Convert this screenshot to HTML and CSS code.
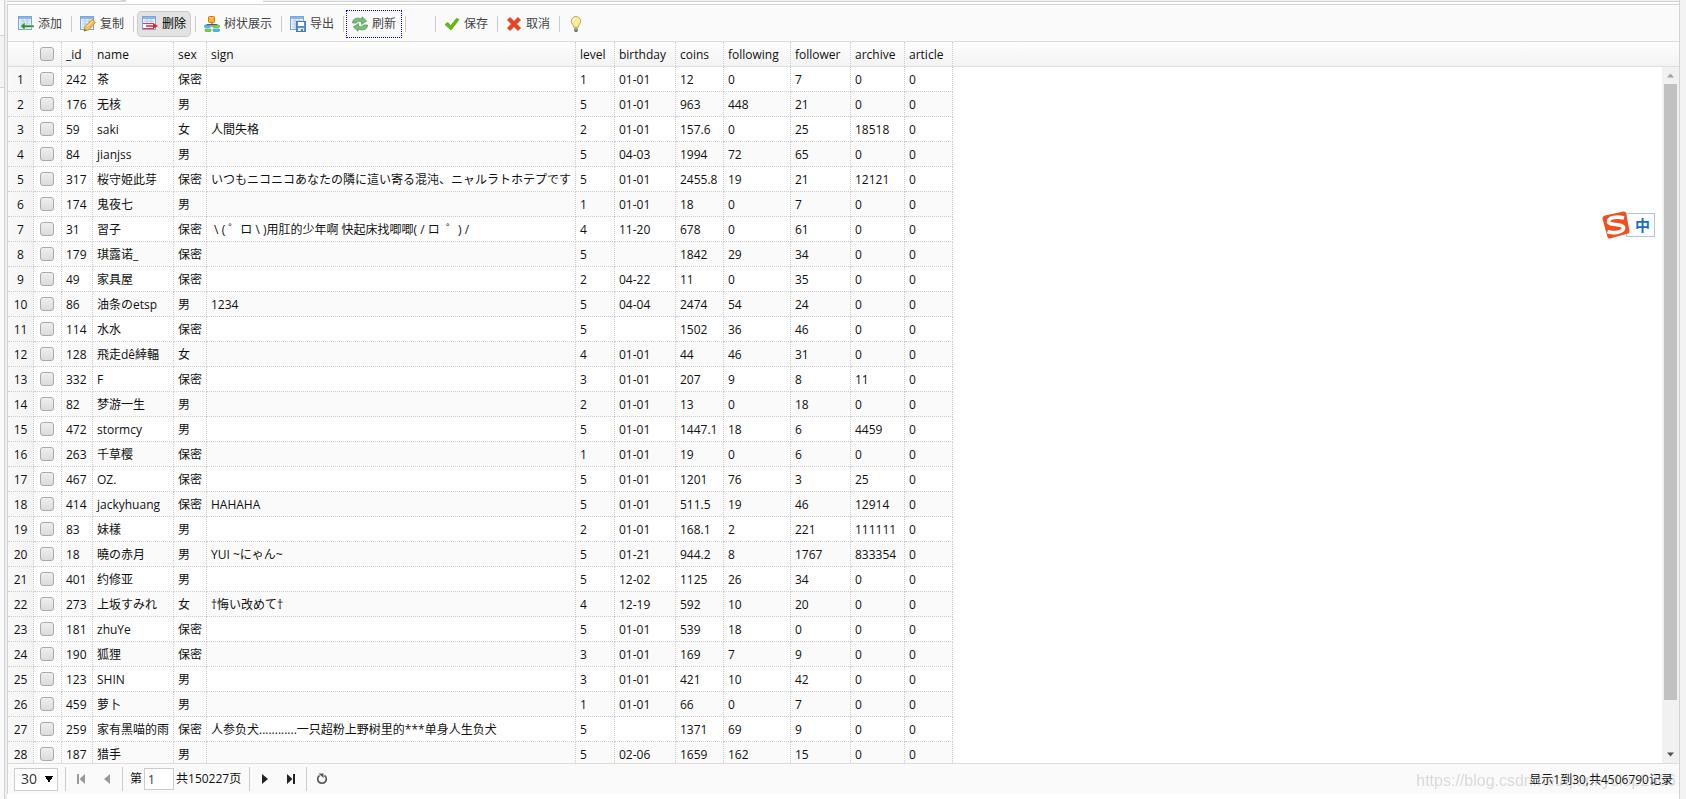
FILE: index.html
```html
<!DOCTYPE html>
<html lang="zh-CN">
<head>
<meta charset="utf-8">
<title>用户数据</title>
<link rel="stylesheet" href="styles.css">
</head>
<body>
<div class="page">
<div class="side"><div class="side-item"></div></div>
<main class="main">
<div class="tabs"><span class="tab-off"></span><span class="tab-gap"></span><span class="tab-on"></span><span class="tab-rest"></span></div>
<section class="panel">
<div class="toolbar">
<button class="tool" type="button"><svg viewBox="0 0 16 16"><rect x=".5" y=".5" width="13" height="13" fill="#eaf3fc" stroke="#7ba6dc"/><path d="M1 2h12" stroke="#8ab6ea" stroke-width="2"/><path d="M2 5h10M2 8h10M2 11h10M5 3v10M9 3v10" stroke="#a9c8ea"/><path d="M2.500 10l4.500-4v3h9v2.500H7v3z" fill="#2e9330" stroke="#fff" stroke-width=".5"/></svg>添加</button><i class="sep"></i>
<button class="tool" type="button"><svg viewBox="0 0 16 16"><rect x=".5" y=".5" width="13" height="13" fill="#eaf3fc" stroke="#7ba6dc"/><path d="M1 2h12" stroke="#8ab6ea" stroke-width="2"/><path d="M2 5h10M2 8h10M2 11h10M5 3v10M9 3v10" stroke="#a9c8ea"/><path d="M4 15l1-4.500 7-7 3.500 3L8.500 14z" fill="#f5bd4d" stroke="#c58324" stroke-width=".8"/><path d="M6 11.500l7-6.500" stroke="#ffe7a6"/><path d="M4 15l.8-2 1.300 1.300z" fill="#444"/></svg>复制</button><i class="sep"></i>
<button class="tool tool-active" type="button"><svg viewBox="0 0 16 16"><rect x=".5" y=".5" width="13" height="13" fill="#eaf3fc" stroke="#7ba6dc"/><path d="M1 2h12" stroke="#8ab6ea" stroke-width="2"/><path d="M2 5h10M2 8h10M5 3v6M9 3v6" stroke="#a9c8ea"/><rect x="1" y="8" width="12" height="5" fill="#fff"/><path d="M1 7.500h11M1 12.500h11" stroke="#e73b43"/><path d="M4 10h8" stroke="#e7222c" stroke-width="1.500"/><path d="M11 7l5 3-5 3z" fill="#e7222c"/></svg>删除</button><i class="sep"></i>
<button class="tool" type="button"><svg viewBox="0 0 16 16"><path d="M8 6v5M3 10V8.500h10V10" fill="none" stroke="#555"/><rect x="4.500" y=".5" width="6" height="6" rx="1" fill="#ffb12b" stroke="#d87a0b"/><path d="M6 2h3" stroke="#ffe19a"/><rect x=".5" y="9" width="6" height="2.500" rx="1" fill="#55b9ec" stroke="#2684c7" stroke-width=".6"/><rect x="9" y="9" width="6.500" height="2.500" rx="1" fill="#7fd84a" stroke="#3d9a22" stroke-width=".6"/><rect x="1" y="13" width="6" height="2.500" rx="1" fill="#7fd84a" stroke="#3d9a22" stroke-width=".6"/><rect x="9" y="13" width="6.500" height="2.500" rx="1" fill="#55b9ec" stroke="#2684c7" stroke-width=".6"/></svg>树状展示</button><i class="sep"></i>
<button class="tool" type="button"><svg viewBox="0 0 16 16"><rect x=".5" y=".5" width="13" height="13" fill="#eaf3fc" stroke="#7ba6dc"/><path d="M1 2h12" stroke="#8ab6ea" stroke-width="2"/><path d="M2 5h10M2 8h10M2 11h10M5 3v10M9 3v10" stroke="#a9c8ea"/><rect x="6.500" y="5.500" width="9" height="10" fill="#5d8fd3" stroke="#4a7abf"/><rect x="8" y="6" width="6" height="4" fill="#fff"/><rect x="8" y="12" width="6" height="3" fill="#dce9f8"/><rect x="11" y="13" width="2" height="2" fill="#3fa040"/></svg>导出</button><i class="sep"></i>
<button class="tool tool-focus" type="button"><svg viewBox="0 0 16 16"><path d="M.5 7C.5 2.500 5 1 10 3V.8l4.500 4.200-5 3.500V6C7 5 5 5 4.500 7z" fill="#78bd78" stroke="#4f9a56" stroke-width=".8"/><path d="M15.500 9c0 4.500-4.500 6-9.500 4v2.200L1.500 11l5-3.500V10c2.500 1 4.500 1 5-1z" fill="#78bd78" stroke="#4f9a56" stroke-width=".8"/></svg>刷新</button><i class="sep"></i>
<span class="tool-blank"></span><i class="sep"></i>
<button class="tool" type="button"><svg viewBox="0 0 16 16"><path d="M1 8.500l3-2L6.500 10 12.500 2.500l2.500 1L7 14z" fill="#66bd0b" stroke="#4fa003" stroke-width=".8" stroke-linejoin="round"/></svg>保存</button><i class="sep"></i>
<button class="tool" type="button"><svg viewBox="0 0 16 16"><path d="M4 1.500L8 5.500l4-4 2.500 2.500-4 4 4 4L12 14.500l-4-4-4 4L1.500 12l4-4-4-4z" fill="#e8431c" stroke="#cf3511" stroke-width=".8" stroke-linejoin="round"/></svg>取消</button><i class="sep"></i>
<button class="tool" type="button" aria-label="提示"><svg viewBox="0 0 16 16"><path d="M8 .5a4.700 4.700 0 0 0-4.700 4.700c0 2.500 2.200 3.300 2.400 6h4.600c.2-2.700 2.400-3.500 2.400-6A4.700 4.700 0 0 0 8 .5z" fill="#f6ec9c" stroke="#c7a64c"/><path d="M5.500 5c0-1.500 1-2.500 2-2.500" fill="none" stroke="#fff" stroke-width="1.500"/><path d="M6 12h4v2.500L9 16H7l-1-1.500z" fill="#777"/><path d="M6 13h4" stroke="#ccc"/></svg></button>
</div>
<div class="grid-head">
<table class="grid">
<colgroup><col class="c-num"><col class="c-check"><col class="c-id"><col class="c-name"><col class="c-sex"><col class="c-sign"><col class="c-level"><col class="c-birth"><col class="c-coins"><col class="c-following"><col class="c-follower"><col class="c-archive"><col class="c-article"></colgroup>
<thead><tr><th><th><input type="checkbox" aria-label="全选"><th>_id<th>name<th>sex<th>sign<th>level<th>birthday<th>coins<th>following<th>follower<th>archive<th>article</tr></thead>
</table>
</div>
<div class="grid-body">
<div class="rows">
<table class="grid">
<colgroup><col class="c-num"><col class="c-check"><col class="c-id"><col class="c-name"><col class="c-sex"><col class="c-sign"><col class="c-level"><col class="c-birth"><col class="c-coins"><col class="c-following"><col class="c-follower"><col class="c-archive"><col class="c-article"></colgroup>
<tbody>
<tr><th>1<td><input type="checkbox" aria-label="选择 1"><td>242<td>茶<td>保密<td><td>1<td>01-01<td>12<td>0<td>7<td>0<td>0
<tr><th>2<td><input type="checkbox" aria-label="选择 2"><td>176<td>无核<td>男<td><td>5<td>01-01<td>963<td>448<td>21<td>0<td>0
<tr><th>3<td><input type="checkbox" aria-label="选择 3"><td>59<td>saki<td>女<td>人間失格<td>2<td>01-01<td>157.6<td>0<td>25<td>18518<td>0
<tr><th>4<td><input type="checkbox" aria-label="选择 4"><td>84<td>jianjss<td>男<td><td>5<td>04-03<td>1994<td>72<td>65<td>0<td>0
<tr><th>5<td><input type="checkbox" aria-label="选择 5"><td>317<td>桜守姫此芽<td>保密<td>いつもニコニコあなたの隣に這い寄る混沌、ニャルラトホテプです<td>5<td>01-01<td>2455.8<td>19<td>21<td>12121<td>0
<tr><th>6<td><input type="checkbox" aria-label="选择 6"><td>174<td>鬼夜七<td>男<td><td>1<td>01-01<td>18<td>0<td>7<td>0<td>0
<tr><th>7<td><input type="checkbox" aria-label="选择 7"><td>31<td>習子<td>保密<td>&nbsp;\ ( ゜ロ \ )用肛的少年啊 快起床找唧唧( / ロ&nbsp; ゜) /<td>4<td>11-20<td>678<td>0<td>61<td>0<td>0
<tr><th>8<td><input type="checkbox" aria-label="选择 8"><td>179<td>琪露诺_<td>保密<td><td>5<td><td>1842<td>29<td>34<td>0<td>0
<tr><th>9<td><input type="checkbox" aria-label="选择 9"><td>49<td>家具屋<td>保密<td><td>2<td>04-22<td>11<td>0<td>35<td>0<td>0
<tr><th>10<td><input type="checkbox" aria-label="选择 10"><td>86<td>油条のetsp<td>男<td>1234<td>5<td>04-04<td>2474<td>54<td>24<td>0<td>0
<tr><th>11<td><input type="checkbox" aria-label="选择 11"><td>114<td>水水<td>保密<td><td>5<td><td>1502<td>36<td>46<td>0<td>0
<tr><th>12<td><input type="checkbox" aria-label="选择 12"><td>128<td>飛走dê緈輻<td>女<td><td>4<td>01-01<td>44<td>46<td>31<td>0<td>0
<tr><th>13<td><input type="checkbox" aria-label="选择 13"><td>332<td>F<td>保密<td><td>3<td>01-01<td>207<td>9<td>8<td>11<td>0
<tr><th>14<td><input type="checkbox" aria-label="选择 14"><td>82<td>梦游一生<td>男<td><td>2<td>01-01<td>13<td>0<td>18<td>0<td>0
<tr><th>15<td><input type="checkbox" aria-label="选择 15"><td>472<td>stormcy<td>男<td><td>5<td>01-01<td>1447.1<td>18<td>6<td>4459<td>0
<tr><th>16<td><input type="checkbox" aria-label="选择 16"><td>263<td>千草樱<td>保密<td><td>1<td>01-01<td>19<td>0<td>6<td>0<td>0
<tr><th>17<td><input type="checkbox" aria-label="选择 17"><td>467<td>OZ.<td>保密<td><td>5<td>01-01<td>1201<td>76<td>3<td>25<td>0
<tr><th>18<td><input type="checkbox" aria-label="选择 18"><td>414<td>jackyhuang<td>保密<td>HAHAHA<td>5<td>01-01<td>511.5<td>19<td>46<td>12914<td>0
<tr><th>19<td><input type="checkbox" aria-label="选择 19"><td>83<td>妹樣<td>男<td><td>2<td>01-01<td>168.1<td>2<td>221<td>111111<td>0
<tr><th>20<td><input type="checkbox" aria-label="选择 20"><td>18<td>曉の赤月<td>男<td>YUI ~にゃん~<td>5<td>01-21<td>944.2<td>8<td>1767<td>833354<td>0
<tr><th>21<td><input type="checkbox" aria-label="选择 21"><td>401<td>约修亚<td>男<td><td>5<td>12-02<td>1125<td>26<td>34<td>0<td>0
<tr><th>22<td><input type="checkbox" aria-label="选择 22"><td>273<td>上坂すみれ<td>女<td>†悔い改めて†<td>4<td>12-19<td>592<td>10<td>20<td>0<td>0
<tr><th>23<td><input type="checkbox" aria-label="选择 23"><td>181<td>zhuYe<td>保密<td><td>5<td>01-01<td>539<td>18<td>0<td>0<td>0
<tr><th>24<td><input type="checkbox" aria-label="选择 24"><td>190<td>狐狸<td>保密<td><td>3<td>01-01<td>169<td>7<td>9<td>0<td>0
<tr><th>25<td><input type="checkbox" aria-label="选择 25"><td>123<td>SHIN<td>男<td><td>3<td>01-01<td>421<td>10<td>42<td>0<td>0
<tr><th>26<td><input type="checkbox" aria-label="选择 26"><td>459<td>萝卜<td>男<td><td>1<td>01-01<td>66<td>0<td>7<td>0<td>0
<tr><th>27<td><input type="checkbox" aria-label="选择 27"><td>259<td>家有黑喵的雨<td>保密<td>人参负犬............一只超粉上野树里的***单身人生负犬<td>5<td><td>1371<td>69<td>9<td>0<td>0
<tr><th>28<td><input type="checkbox" aria-label="选择 28"><td>187<td>猎手<td>男<td><td>5<td>02-06<td>1659<td>162<td>15<td>0<td>0
</tbody>
</table>
</div>
<div class="scrollbar"><svg viewBox="0 0 17 17"><path d="M5 10.500l3.500-4 3.500 4z" fill="#a3a3a3"/></svg><div class="track"><div class="thumb"></div></div><svg viewBox="0 0 17 17"><path d="M5 6.500l3.500 4 3.500-4z" fill="#505050"/></svg></div>
</div>
<footer class="pager">
<select class="size" aria-label="每页条数"><option>30</option></select>
<i class="bar"></i>
<button class="nav" type="button" aria-label="首页"><svg viewBox="0 0 16 16"><path d="M4 3h2v10H4zM12 3v10L6.500 8z" fill="#999"/></svg></button>
<button class="nav" type="button" aria-label="上一页"><svg viewBox="0 0 16 16"><path d="M11 3v10L5 8z" fill="#999"/></svg></button>
<i class="bar"></i>
<label class="pageno">第<input type="text" value="1"></label><span class="pages">共150227页</span>
<i class="bar"></i>
<button class="nav" type="button" aria-label="下一页"><svg viewBox="0 0 16 16"><path d="M5 3v10l6-5z" fill="#222"/></svg></button>
<button class="nav" type="button" aria-label="末页"><svg viewBox="0 0 16 16"><path d="M10 3h2v10h-2zM4 3v10l5.500-5z" fill="#222"/></svg></button>
<i class="bar"></i>
<button class="nav" type="button" aria-label="刷新"><svg viewBox="0 0 16 16"><path d="M5.500 4.500a4.300 4.300 0 1 0 5 0" fill="none" stroke="#555" stroke-width="1.600"/><path d="M4.500 2.500h5v4.500z" fill="#555"/></svg></button>
<span class="total">显示1到30,共4506790记录</span>
</footer>
</section>
</main>
<div class="edge"></div>
</div>
<div class="ime"><svg class="ime-logo" viewBox="0 0 28 28"><path d="M3 4.500L21.500.5q2-.3 2.500 1.500l3.500 18q.3 2-1.500 2.500L8 27.500q-2 .3-2.500-1.500L.5 8Q.2 5 3 4.500z" fill="#f0501f"/><path d="M22 7C15 5 6.500 6.500 6.500 10.500c0 4.500 15 1.500 15 6.500 0 4-10 6-16 3.500" fill="none" stroke="#fff" stroke-width="3.600"/></svg><span class="ime-mode">中</span></div>
<div class="watermark">https://blog.csdn.net/qiankydlop2306</div>
</body>
</html>
```
FILE: styles.css
```css
* { box-sizing: border-box; }
body {
  margin: 0;
  background: #fff;
  color: #111;
  font: 12px/16px "Open Sans", "Noto Sans CJK SC", sans-serif;
}
.page { display: flex; height: 100vh; overflow: hidden; }
.side { width: 5px; padding-top: 35px; background: #fafafa; border-right: 1px solid #d3d3d3; }
.side-item { height: 53px; border: solid #d3d3d3; border-width: 1px 0; background: #f3f3f3; }
.main { flex: 1; min-width: 0; display: flex; flex-direction: column; padding: 0 0 5px 2px; background: linear-gradient(90deg, #eee 2px, #fff 2px); }
.edge { width: 7px; background: #f3f3f3; border-left: 1px solid #d3d3d3; margin-left: -1px; }
.tabs { display: flex; height: 4px; }
.tab-off { width: 114px; height: 2px; border-bottom: 1px solid #d3d3d3; background: #f3f3f3; }
.tab-gap { width: 5px; height: 2px; background: #d3d3d3; }
.tab-on { width: 137px; }
.tab-rest { flex: 1; height: 2px; background: #f3f3f3; border-bottom: 1px solid #d3d3d3; }
.panel { flex: 1; min-height: 0; display: flex; flex-direction: column; border: solid #d3d3d3; border-width: 1px 1px 0; }
.toolbar { display: flex; align-items: center; height: 37px; padding: 1px 0 0 5px; background: #fafafa; border-bottom: 1px solid #ddd; }
.tool {
  display: flex; align-items: center; gap: 4px;
  height: 26px; padding: 0 5px; border: 0; border-radius: 5px;
  background: none; color: #444; font: inherit; white-space: nowrap;
}
.tool svg { width: 16px; height: 16px; }
.tool-active { background: #e2e2e2; color: #000; box-shadow: inset 0 0 0 1px #ccc; }
.tool-focus { outline: 1px dotted #00f; border-radius: 0; }
.tool-blank { width: 22px; }
.sep { width: 1px; height: 16px; margin: 0 3px 0 4px; background: #ccc; }
.grid-head { background: linear-gradient(#fdfdfd, #f3f3f3); border-bottom: 1px solid #ddd; }
.grid { table-layout: fixed; width: 945px; border-collapse: separate; border-spacing: 0; }
.grid th, .grid td {
  height: 25px; padding: 2px 4px 0; border: dotted #ccc; border-width: 0 1px 1px 0;
  text-align: left; font-weight: 400; white-space: nowrap; overflow: hidden; line-height: 20px;
}
.grid thead th { height: 24px; border-bottom: 0; }
.grid tbody th { padding: 2px 0 0; text-align: center; background: linear-gradient(90deg, #f9f9f9, #f3f3f3); }
.grid tbody tr:nth-child(even) { background: #fafafa; }
.grid td:nth-child(2), .grid th:nth-child(2) { padding: 0 6px 1px; }
.c-num { width: 26px; }
.c-check { width: 28px; }
.c-id { width: 31px; }
.c-name { width: 81px; }
.c-sex { width: 33px; }
.c-sign { width: 369px; }
.c-level { width: 39px; }
.c-birth { width: 61px; }
.c-coins { width: 48px; }
.c-following { width: 67px; }
.c-follower { width: 60px; }
.c-archive { width: 54px; }
.c-article { width: 48px; }
input[type="checkbox"] {
  appearance: none; display: block; width: 14px; height: 14px; margin: 0;
  border: 1px solid #aaa; border-radius: 3px; background: linear-gradient(#eee, #dcdcdc);
}
.grid-body { flex: 1; min-height: 0; display: flex; }
.rows { flex: 1; overflow: hidden; }
.scrollbar { width: 17px; display: flex; flex-direction: column; background: #f1f1f1; }
.scrollbar svg { width: 17px; height: 17px; flex: none; }
.track { flex: 1; padding: 0 2px; }
.thumb { height: 93%; background: #c1c1c1; }
.pager { display: flex; align-items: center; height: 31px; padding: 0 6px; background: #fafafa; border-top: 1px solid #ddd; }
.size {
  appearance: none; width: 44px; height: 23px; margin: 0 5px 0 0; padding: 0 6px;
  border: 1px solid #ccc; border-radius: 0;
  color: #333; font: 14px/20px "Open Sans", sans-serif;
  background:
    linear-gradient(to top right, transparent 50%, #000 50%) 30px 7px / 4px 7px no-repeat,
    linear-gradient(to top left, transparent 50%, #000 50%) 34px 7px / 4px 7px no-repeat,
    #fff;
}
.bar { width: 1px; height: 24px; margin: 0 2px; background: #ccc; }
.nav { display: flex; width: 26px; height: 24px; padding: 4px 5px; border: 0; background: none; }
.nav svg { width: 16px; height: 16px; }
.pageno { display: flex; align-items: center; gap: 2px; margin: 0 2px 0 5px; }
.pageno input { width: 30px; height: 22px; padding: 0 3px; border: 1px solid #ccc; color: #333; font: inherit; }
.pages { margin-right: 6px; }
.total { margin-left: auto; padding-top: 2px; }
.ime { position: fixed; right: 31px; top: 211px; display: flex; align-items: center; }
.ime-logo { width: 28px; height: 28px; margin-right: -4px; z-index: 1; }
.ime-mode { width: 29px; height: 24px; padding-left: 8px; border: 1px solid #b4c6d5; background: #fcfdfe; color: #1670c8; font: 700 15px/21px "Noto Sans CJK SC", sans-serif; }
.watermark { position: fixed; right: 10px; bottom: 8px; color: rgba(120, 120, 120, .25); font: 16px/20px "Liberation Sans", sans-serif; }
```
